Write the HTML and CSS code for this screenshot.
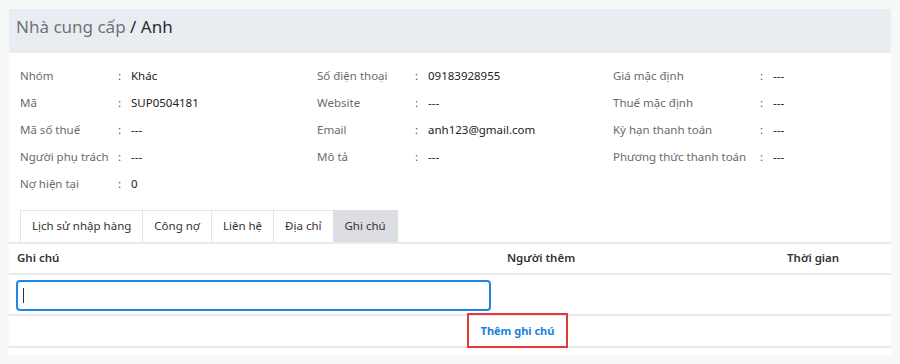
FILE: index.html
```html
<!DOCTYPE html>
<html>
<head>
  <meta charset="UTF-8">
  <title>Nhà cung cấp / Anh</title>
  <link rel="stylesheet" href="styles.css">
</head>
<body>
  <div class="panel">
    <div class="panel-header">
      <span class="crumb">Nhà cung cấp</span> / <span class="crumb-current">Anh</span>
    </div>

    <div class="info">
      <div class="info-col col-1">
        <div class="info-row"><span class="label">Nhóm</span><span class="colon">:</span><span class="value">Khác</span></div>
        <div class="info-row"><span class="label">Mã</span><span class="colon">:</span><span class="value">SUP0504181</span></div>
        <div class="info-row"><span class="label">Mã số thuế</span><span class="colon">:</span><span class="value">---</span></div>
        <div class="info-row"><span class="label">Người phụ trách</span><span class="colon">:</span><span class="value">---</span></div>
        <div class="info-row"><span class="label">Nợ hiện tại</span><span class="colon">:</span><span class="value">0</span></div>
      </div>
      <div class="info-col col-2">
        <div class="info-row"><span class="label">Số điện thoại</span><span class="colon">:</span><span class="value">09183928955</span></div>
        <div class="info-row"><span class="label">Website</span><span class="colon">:</span><span class="value">---</span></div>
        <div class="info-row"><span class="label">Email</span><span class="colon">:</span><span class="value">anh123@gmail.com</span></div>
        <div class="info-row"><span class="label">Mô tả</span><span class="colon">:</span><span class="value">---</span></div>
      </div>
      <div class="info-col col-3">
        <div class="info-row"><span class="label">Giá mặc định</span><span class="colon">:</span><span class="value">---</span></div>
        <div class="info-row"><span class="label">Thuế mặc định</span><span class="colon">:</span><span class="value">---</span></div>
        <div class="info-row"><span class="label">Kỳ hạn thanh toán</span><span class="colon">:</span><span class="value">---</span></div>
        <div class="info-row"><span class="label">Phương thức thanh toán</span><span class="colon">:</span><span class="value">---</span></div>
      </div>
    </div>

    <div class="tabs">
      <div class="tab">Lịch sử nhập hàng</div>
      <div class="tab">Công nợ</div>
      <div class="tab">Liên hệ</div>
      <div class="tab">Địa chỉ</div>
      <div class="tab active">Ghi chú</div>
    </div>

    <div class="notes">
      <div class="notes-head">
        <div class="cell">Ghi chú</div>
        <div class="cell">Người thêm</div>
        <div class="cell">Thời gian</div>
      </div>
      <div class="notes-input-row">
        <div class="note-input"><span class="caret"></span></div>
      </div>
      <div class="notes-action">
        <button class="add-note">Thêm ghi chú</button>
      </div>
    </div>
  </div>
</body>
</html>
```

FILE: styles.css
```css
body {
  margin: 0;
  padding: 9px;
  background-color: #f7f8f8;
  font-family: "Noto Sans", "Open Sans", Arial, sans-serif;
  font-size: 11.5px;
  color: #333333;
}

.panel {
  width: 882px;
  height: 346px;
  background-color: #ffffff;
}

.panel-header {
  height: 44px;
  box-sizing: border-box;
  padding: 2px 7px 0;
  background-color: #e9edf1;
  font-size: 17px;
  line-height: 32px;
  color: #2b2b2b;
}

.crumb {
  color: #6d7278;
}

.info {
  display: flex;
  padding: 9px 0 0 11px;
}

.info-col {
  flex: none;
  width: 297px;
}

.col-2 {
  width: 296px;
}

.info-row {
  display: flex;
  height: 27px;
  line-height: 27px;
}

.label {
  width: 98px;
  color: #6a6a6a;
}

.col-3 .label {
  width: 147px;
}

.colon {
  width: 13px;
  color: #555555;
}

.value {
  color: #222222;
}

.tabs {
  display: flex;
  margin: 13px 0 0 11px;
}

.tab {
  height: 32px;
  box-sizing: border-box;
  padding: 0 11px;
  line-height: 30px;
  border: 1px solid #e3e5e8;
  border-bottom: none;
  margin-right: -1px;
  color: #333333;
}

.tab.active {
  background-color: #dcdde1;
  border-color: #dcdde1;
}

.notes {
  border-top: 2px solid #e9eaee;
}

.notes-head {
  display: grid;
  grid-template-columns: 490px 280px 1fr;
  height: 29px;
  line-height: 28px;
  font-weight: 600;
  border-bottom: 2px solid #e9eaee;
}

.notes-head .cell {
  padding-left: 8px;
}

.notes-input-row {
  height: 41px;
  box-sizing: border-box;
  padding: 5px 0 0 7px;
  border-bottom: 2px solid #e9eaee;
}

.note-input {
  width: 475px;
  height: 31px;
  box-sizing: border-box;
  border: 2px solid #1e88e5;
  border-radius: 4px;
  padding: 6px 5px;
}

.caret {
  display: block;
  width: 1px;
  height: 15px;
  background-color: #333333;
}

.notes-action {
  height: 33px;
  border-bottom: 2px solid #e9eaee;
  margin-top: -3px;
}

.add-note {
  margin-left: 458px;
  width: 101px;
  height: 35px;
  background-color: transparent;
  border: 2px solid #e53935;
  font-family: "Noto Sans", "Open Sans", Arial, sans-serif;
  font-size: 11px;
  font-weight: 700;
  color: #1a7fe0;
  cursor: pointer;
}
```
